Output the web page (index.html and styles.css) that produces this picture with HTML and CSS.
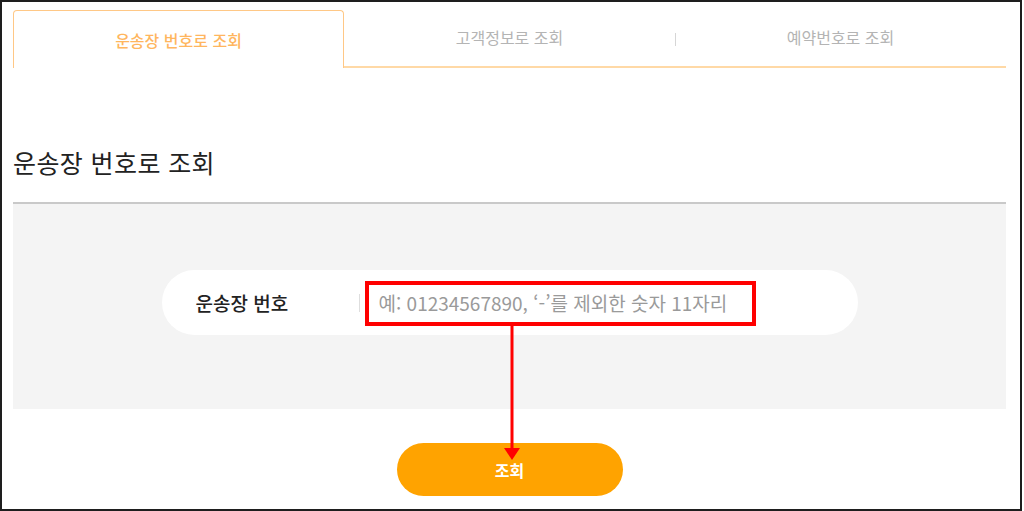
FILE: index.html
```html
<!DOCTYPE html>
<html lang="ko">
<head>
<meta charset="utf-8">
<title>운송장 번호로 조회</title>
<link rel="stylesheet" href="styles.css">
</head>
<body>
<div class="frame">
  <nav class="tabs">
    <a class="tab is-active">운송장 번호로 조회</a>
    <a class="tab">고객정보로 조회</a>
    <a class="tab tab-sep">예약번호로 조회</a>
  </nav>

  <h2 class="title">운송장 번호로 조회</h2>

  <section class="search-box">
    <div class="field">
      <label class="field-label" for="waybill">운송장 번호</label>
      <span class="field-divider"></span>
      <input class="field-input" id="waybill" type="text" placeholder="예: 01234567890, ‘-’를 제외한 숫자 11자리">
    </div>
  </section>

  <div class="actions">
    <button class="btn-search" type="button">조회</button>
  </div>

  <div class="annot-rect"></div>
  <svg class="annot-arrow" width="20" height="136" viewBox="0 0 20 136">
    <rect x="8.5" y="0" width="3" height="124" fill="#ff0000"/>
    <polygon points="2,122 18,122 10,134" fill="#ff0000"/>
  </svg>
</div>
</body>
</html>
```

FILE: styles.css
```css
* { box-sizing: border-box; }

html, body {
  margin: 0;
  padding: 0;
  background: #ffffff;
}

body {
  font-family: "Noto Sans CJK KR", "Noto Sans", sans-serif;
  color: #222222;
}

.frame {
  position: relative;
  width: 1022px;
  height: 511px;
  border: 2px solid #1e1e1e;
  padding: 8px 14px 0 11px;
  overflow: hidden;
}

/* Tabs */
.tabs {
  display: grid;
  grid-template-columns: 1fr 1fr 1fr;
  height: 58px;
}

.tab {
  display: flex;
  align-items: center;
  justify-content: center;
  font-size: 16px;
  color: #b4b4b4;
  border-bottom: 2px solid #ffd9a6;
  position: relative;
  padding-bottom: 2px;
  cursor: pointer;
}

.tab.is-active {
  color: #ffb65e;
  font-weight: 500;
  border: 1px solid #ffc886;
  border-bottom: none;
  border-radius: 4px 4px 0 0;
  padding-bottom: 0;
}

.tab-sep::before {
  content: "";
  position: absolute;
  left: 0;
  top: 23px;
  width: 1px;
  height: 13px;
  background: #d6d6d6;
}

/* Title */
.title {
  margin: 77px 0 23px;
  font-size: 25px;
  line-height: 34px;
  letter-spacing: 0.4px;
  font-weight: 400;
  color: #222222;
}

/* Search box */
.search-box {
  border-top: 2px solid #c9c9c9;
  background: #f4f4f4;
  padding: 66px 0 74px;
  display: flex;
  justify-content: center;
}

.field {
  width: 696px;
  height: 65px;
  background: #ffffff;
  border-radius: 33px;
  display: flex;
  align-items: center;
  padding-left: 34px;
}

.field-label {
  width: 163px;
  font-size: 19px;
  font-weight: 500;
  color: #222222;
}

.field-divider {
  width: 1px;
  height: 18px;
  background: #dedede;
}

.field-input {
  flex: 1;
  margin-left: 19px;
  border: none;
  outline: none;
  background: transparent;
  font-family: "Noto Sans CJK KR", "Noto Sans", sans-serif;
  font-size: 19px;
  color: #222222;
  padding: 0;
}

.field-input::placeholder {
  color: #9a9a9a;
}

/* Button */
.actions {
  display: flex;
  justify-content: center;
  padding-top: 34px;
}

.btn-search {
  width: 226px;
  height: 53px;
  border: none;
  border-radius: 27px;
  background: #ffa300;
  color: #ffffff;
  font-family: "Noto Sans CJK KR", "Noto Sans", sans-serif;
  font-size: 16px;
  font-weight: 700;
  cursor: pointer;
}

/* Annotation overlay */
.annot-rect {
  position: absolute;
  left: 363px;
  top: 279px;
  width: 391px;
  height: 45px;
  border: 4px solid #ff0000;
}

.annot-arrow {
  position: absolute;
  left: 500px;
  top: 324px;
  display: block;
}
```
